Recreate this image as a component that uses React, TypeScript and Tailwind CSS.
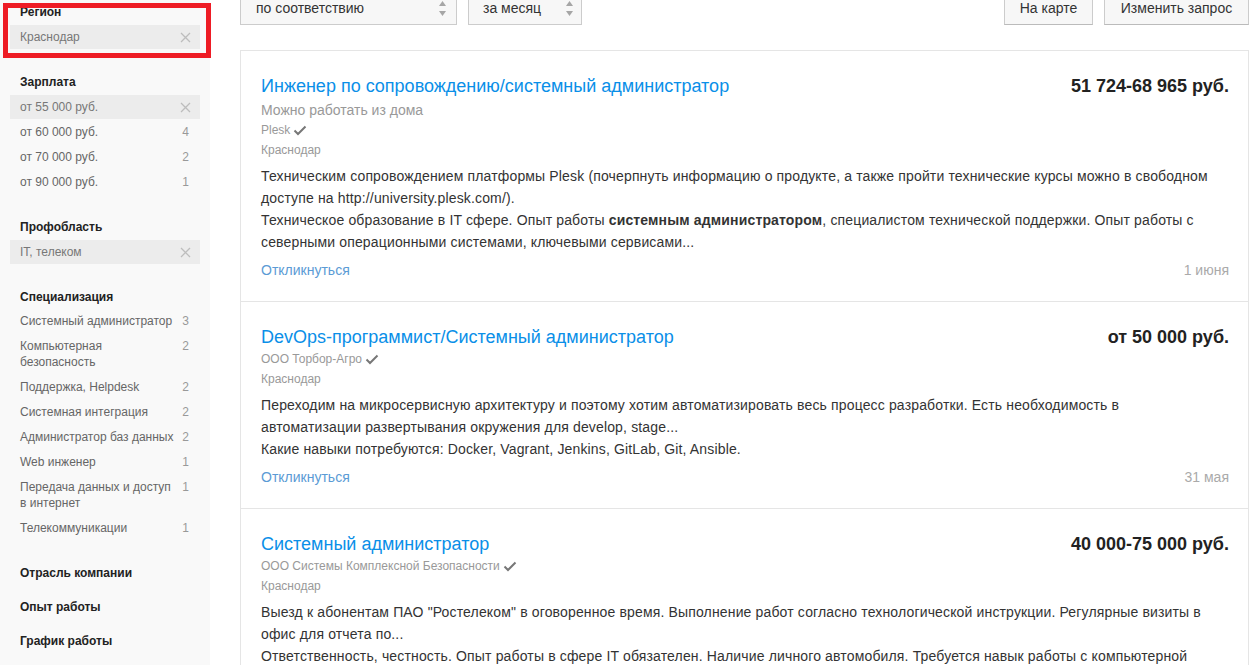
import React from "react";

interface FilterItem {
  label: string;
  count?: number;
}

interface Vacancy {
  title: string;
  salary: string;
  note?: string;
  company: string;
  city: string;
  // snippet lines, already broken as they should wrap
  lines: React.ReactNode[];
  date: string;
}

const salaryItems: FilterItem[] = [
  { label: "от 60 000 руб.", count: 4 },
  { label: "от 70 000 руб.", count: 2 },
  { label: "от 90 000 руб.", count: 1 },
];

const specItems: FilterItem[] = [
  { label: "Системный администратор", count: 3 },
  { label: "Компьютерная безопасность", count: 2 },
  { label: "Поддержка, Helpdesk", count: 2 },
  { label: "Системная интеграция", count: 2 },
  { label: "Администратор баз данных", count: 2 },
  { label: "Web инженер", count: 1 },
  { label: "Передача данных и доступ в интернет", count: 1 },
  { label: "Телекоммуникации", count: 1 },
];

const vacancies: Vacancy[] = [
  {
    title: "Инженер по сопровождению/системный администратор",
    salary: "51 724-68 965 руб.",
    note: "Можно работать из дома",
    company: "Plesk",
    city: "Краснодар",
    lines: [
      "Техническим сопровождением платформы Plesk (почерпнуть информацию о продукте, а также пройти технические курсы можно в свободном",
      "доступе на http://university.plesk.com/).",
      <>
        Техническое образование в IT сфере. Опыт работы{" "}
        <b className="font-bold">системным администратором</b>, специалистом
        технической поддержки. Опыт работы с
      </>,
      "северными операционными системами, ключевыми сервисами...",
    ],
    date: "1 июня",
  },
  {
    title: "DevOps-программист/Системный администратор",
    salary: "от 50 000 руб.",
    company: "ООО Торбор-Агро",
    city: "Краснодар",
    lines: [
      "Переходим на микросервисную архитектуру и поэтому хотим автоматизировать весь процесс разработки. Есть необходимость в",
      "автоматизации развертывания окружения для develop, stage...",
      "Какие навыки потребуются: Docker, Vagrant, Jenkins, GitLab, Git, Ansible.",
    ],
    date: "31 мая",
  },
  {
    title: "Системный администратор",
    salary: "40 000-75 000 руб.",
    company: "ООО Системы Комплексной Безопасности",
    city: "Краснодар",
    lines: [
      'Выезд к абонентам ПАО "Ростелеком" в оговоренное время. Выполнение работ согласно технологической инструкции. Регулярные визиты в',
      "офис для отчета по...",
      "Ответственность, честность. Опыт работы в сфере IT обязателен. Наличие личного автомобиля. Требуется навык работы с компьютерной",
      "техникой...",
    ],
    date: "31 мая",
  },
];

function CloseIcon() {
  return (
    <svg width="11" height="11" viewBox="0 0 11 11" className="shrink-0">
      <path d="M1 1L10 10M10 1L1 10" stroke="#bdbdbd" strokeWidth="1.3" />
    </svg>
  );
}

function CheckIcon() {
  return (
    <svg width="14" height="11" viewBox="0 0 14 11" className="ml-[3px] shrink-0">
      <path d="M1.5 5.5L5 9L12.5 1.5" fill="none" stroke="#777" strokeWidth="2" />
    </svg>
  );
}

function SpinArrows() {
  return (
    <svg width="7" height="15" viewBox="0 0 7 15" className="shrink-0">
      <path d="M3.5 0L7 5H0Z" fill="#a6a6a6" />
      <path d="M3.5 15L7 10H0Z" fill="#a6a6a6" />
    </svg>
  );
}

function Heading({ children }: { children: React.ReactNode }) {
  return (
    <div className="px-[10px] text-[12px] leading-[22px] font-bold text-[#222]">
      {children}
    </div>
  );
}

function Chip({ label }: { label: string }) {
  return (
    <div className="mt-[2px] h-6 flex items-center justify-between pl-[10px] pr-[9px] bg-[#ececec] text-[12px] text-[#777]">
      <span>{label}</span>
      <CloseIcon />
    </div>
  );
}

function Item({ label, count }: FilterItem) {
  return (
    <div className="flex justify-between gap-2 pl-[10px] pr-[11px] py-[4.5px] text-[12px] leading-4 text-[#666]">
      <span>{label}</span>
      <span className="text-[#999]">{count}</span>
    </div>
  );
}

function Sidebar() {
  return (
    <aside className="w-[210px] shrink-0 bg-[#f9f9f9] pt-px px-[10px]">
      <Heading>Регион</Heading>
      <Chip label="Краснодар" />

      <div className="mt-[22px]">
        <Heading>Зарплата</Heading>
        <Chip label="от 55 000 руб." />
        {salaryItems.map((it) => (
          <Item key={it.label} {...it} />
        ))}
      </div>

      <div className="mt-[22px]">
        <Heading>Профобласть</Heading>
        <Chip label="IT, телеком" />
      </div>

      <div className="mt-[22px]">
        <Heading>Специализация</Heading>
        {specItems.map((it) => (
          <Item key={it.label} {...it} />
        ))}
      </div>

      <div className="mt-[22px] flex flex-col gap-3">
        <Heading>Отрасль компании</Heading>
        <Heading>Опыт работы</Heading>
        <Heading>График работы</Heading>
      </div>
    </aside>
  );
}

function Toolbar() {
  return (
    <div className="-mt-[9px] h-[34px] flex items-stretch justify-between text-[14px] text-[#333]">
      <div className="flex gap-[11px]">
        <div className="w-[217px] flex items-center justify-between pl-[15px] pr-[10px] border border-[#ccc] bg-[#f7f7f7]">
          <span>по соответствию</span>
          <SpinArrows />
        </div>
        <div className="w-[114px] flex items-center justify-between pl-[14px] pr-[8px] border border-[#ccc] bg-[#f7f7f7]">
          <span>за месяц</span>
          <SpinArrows />
        </div>
      </div>
      <div className="flex gap-[11px]">
        <button className="w-[89px] border border-[#ccc] border-b-[#bbb] bg-[#f7f7f7] text-[#333]">
          На карте
        </button>
        <button className="w-[145px] border border-[#ccc] border-b-[#bbb] bg-[#f7f7f7] text-[#333]">
          Изменить запрос
        </button>
      </div>
    </div>
  );
}

function VacancyCard({ v }: { v: Vacancy }) {
  return (
    <div className="border-b border-[#e5e5e5] pt-[22px] pb-5 pl-5 pr-[19px]">
      <div className="flex items-center justify-between gap-6 leading-[26px]">
        <a className="text-[18px] text-[#0a8fe8]">{v.title}</a>
        <span className="text-[18px] font-bold text-[#222] whitespace-nowrap">
          {v.salary}
        </span>
      </div>
      {v.note && (
        <div className="text-[14px] leading-[22px] text-[#999]">{v.note}</div>
      )}
      <div className="flex items-center text-[12px] leading-[18px] text-[#999]">
        {v.company}
        <CheckIcon />
      </div>
      <div className="mt-[2px] text-[12px] leading-[18px] text-[#999]">
        {v.city}
      </div>
      <div className="mt-[6px] text-[14px] leading-[22px] tracking-[0.15px] text-[#333]">
        {v.lines.map((line, i) => (
          <div key={i} className="whitespace-nowrap">
            {line}
          </div>
        ))}
      </div>
      <div className="mt-[6px] flex justify-between text-[14px] leading-[22px]">
        <a className="text-[#5b9bd5]">Откликнуться</a>
        <span className="text-[#aaa]">{v.date}</span>
      </div>
    </div>
  );
}

export default function App() {
  return (
    <div className="relative flex min-h-screen bg-white font-['Liberation_Sans',Arial,sans-serif]">
      <Sidebar />
      <main className="ml-[30px] w-[1009px]">
        <Toolbar />
        <div className="mt-[25px] border border-b-0 border-[#e5e5e5]">
          {vacancies.map((v) => (
            <VacancyCard key={v.title} v={v} />
          ))}
        </div>
      </main>
      {/* highlight frame around the region filter */}
      <div className="absolute left-[3px] top-[3px] w-[208px] h-[55px] border-[5px] border-[#ee1c25] pointer-events-none" />
    </div>
  );
}
